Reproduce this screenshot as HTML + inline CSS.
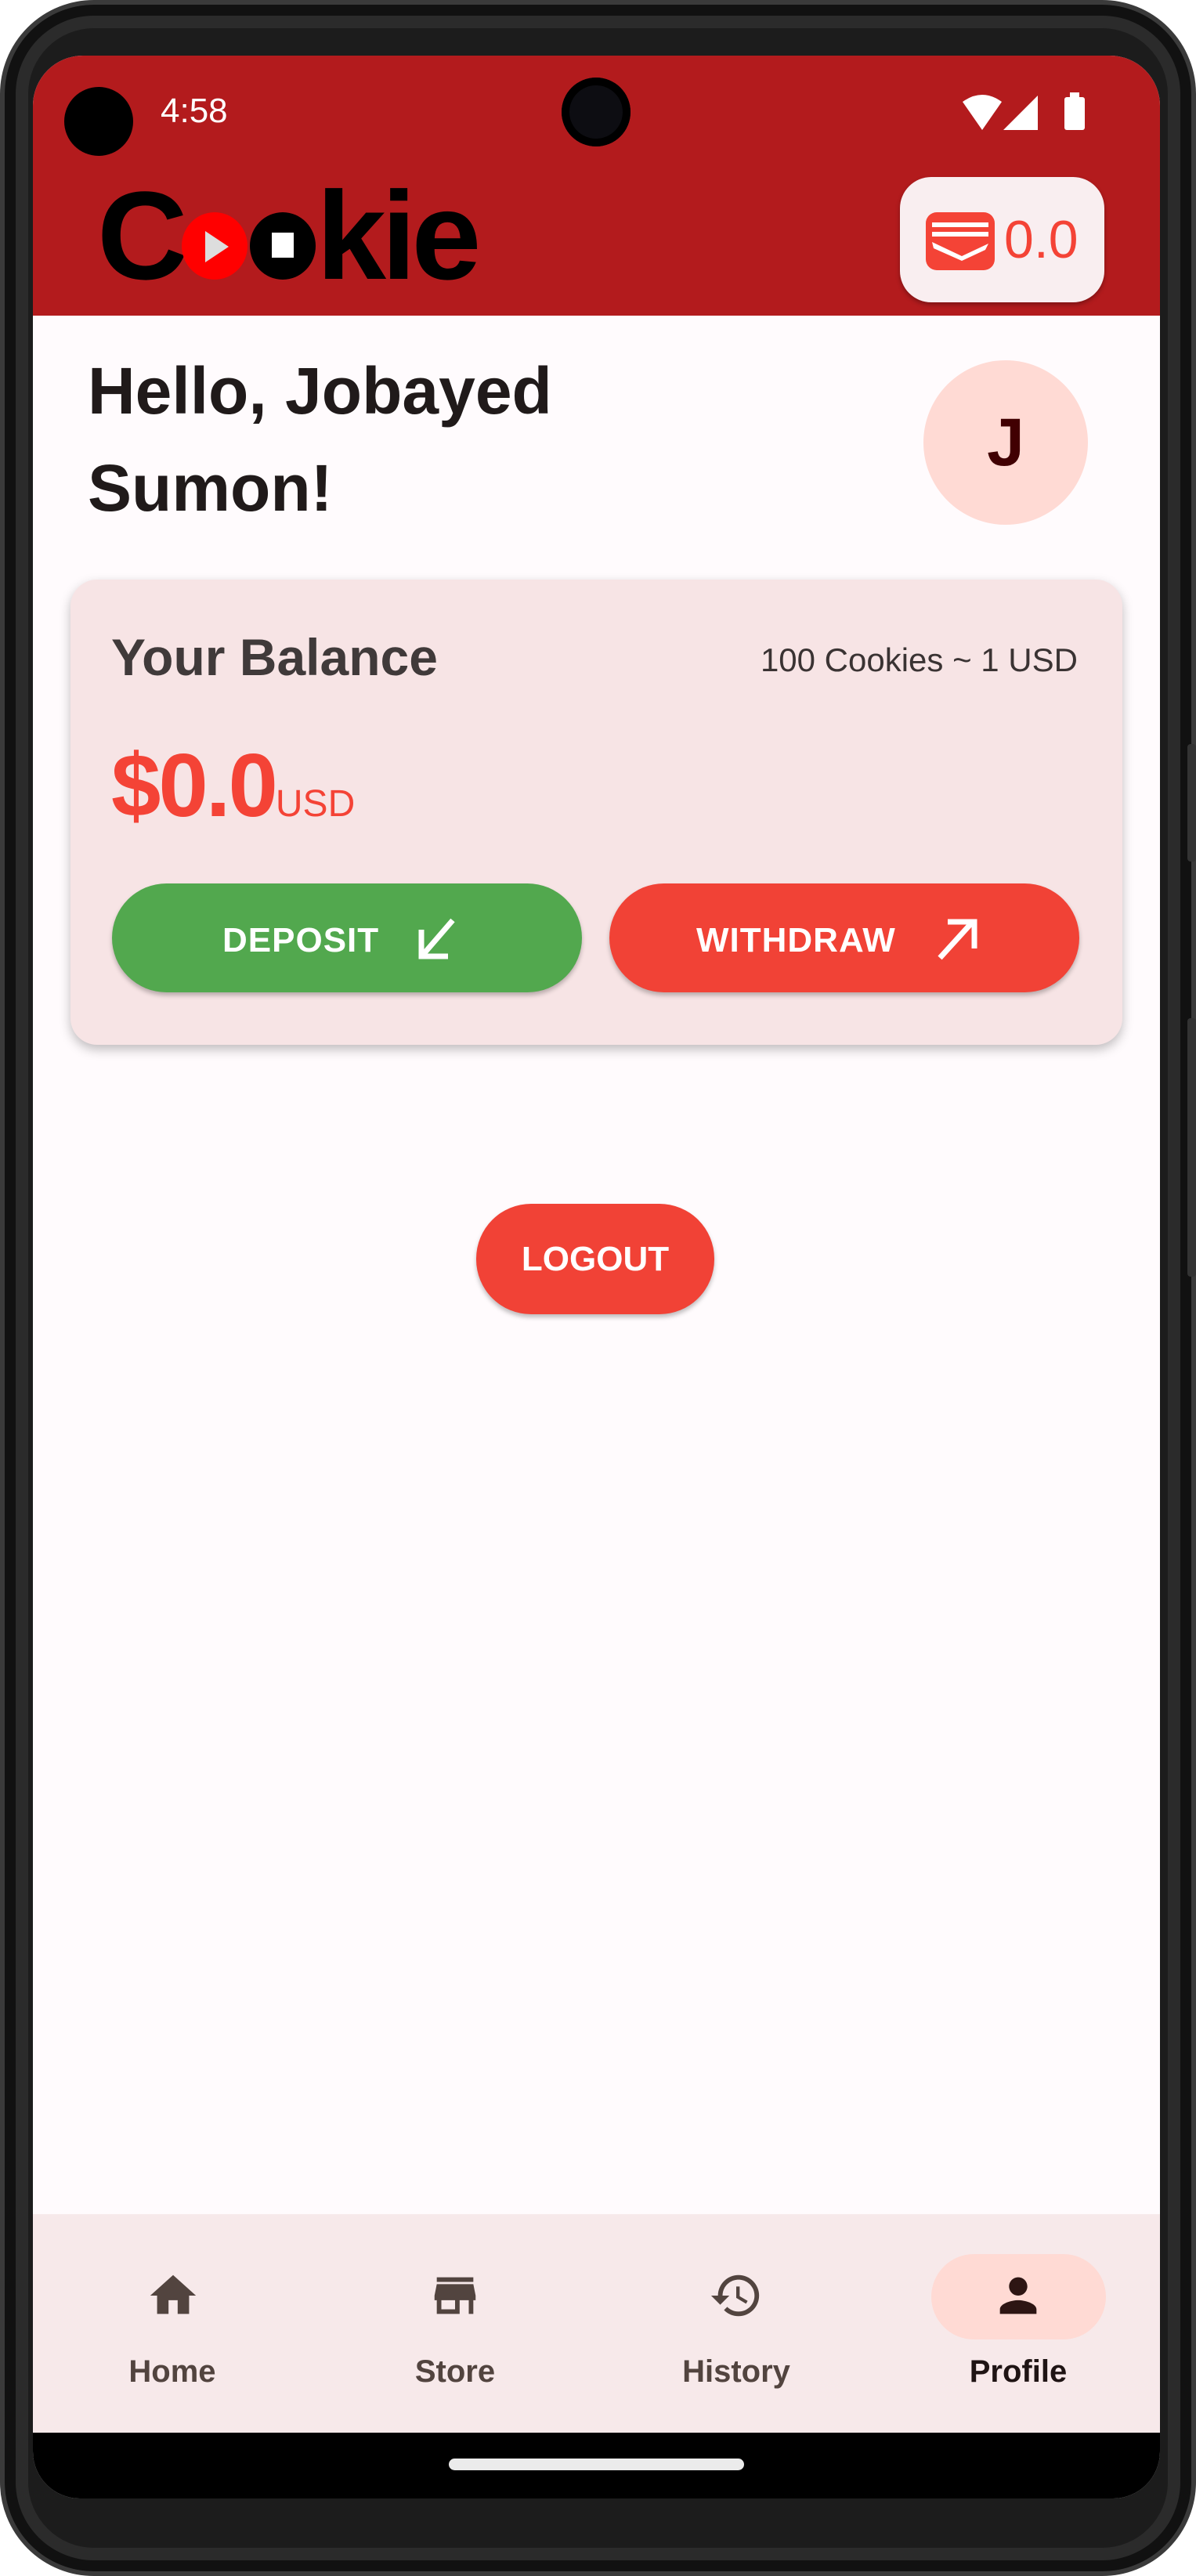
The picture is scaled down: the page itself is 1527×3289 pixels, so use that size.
<!DOCTYPE html>
<html><head><meta charset="utf-8">
<style>
*{margin:0;padding:0;box-sizing:border-box}
html,body{width:1527px;height:3289px;background:#fff;overflow:hidden;font-family:"Liberation Sans",Arial,sans-serif}
.abs{position:absolute}
#phone{left:0;top:0;width:1527px;height:3289px;border-radius:120px;background:#1c1c1c;border:6px solid #3a3a3a;box-shadow:inset 0 0 0 14px #111, inset 0 0 0 30px #2b2b2b}
#screen{left:42px;top:71px;width:1439px;height:3119px;background:#fffbfd;border-radius:64px 64px 60px 60px;overflow:hidden}
</style></head><body>
<div id="phone" class="abs"></div>
<div class="abs" style="left:1516px;top:950px;width:11px;height:150px;background:#333;border-radius:4px"></div>
<div class="abs" style="left:1516px;top:1300px;width:11px;height:330px;background:#333;border-radius:4px"></div>
<div id="screen" class="abs">
  <div class="abs" style="left:0;top:0;width:1439px;height:332px;background:#b31b1d"></div>
  <div class="abs" style="left:40px;top:40px;width:88px;height:88px;border-radius:50%;background:#000"></div>
  <div class="abs" style="left:163px;top:46px;color:#fff;font-size:44px">4:58</div>
  <div class="abs" style="left:675px;top:28px;width:88px;height:88px;border-radius:50%;background:#0d0d12;box-shadow:inset 0 0 0 10px #000"></div>
  <svg class="abs" style="left:1185px;top:45px" width="180" height="55" viewBox="0 0 180 55">
    <path d="M2 14 Q27 -4 52 14 L27 50 Z" fill="#fff"/>
    <path d="M98 6 L98 50 L54 50 Z" fill="#fff"/>
    <rect x="132" y="8" width="26" height="42" rx="3" fill="#fff"/><rect x="139" y="2" width="12" height="8" fill="#fff"/>
  </svg>
  <!-- logo -->
  <div class="abs" style="left:82px;top:150px;font-size:160px;font-weight:bold;color:#000;line-height:160px">C</div>
  <div class="abs" style="left:190px;top:200px;width:84px;height:86px;border-radius:50%;background:#f00"></div>
  <svg class="abs" style="left:216px;top:222px" width="40" height="44"><path d="M4 2 L34 22 L4 42Z" fill="#ddd"/></svg>
  <div class="abs" style="left:277px;top:200px;width:84px;height:86px;border-radius:50%;background:#000"></div>
  <div class="abs" style="left:305px;top:226px;width:28px;height:32px;background:#fff"></div>
  <div class="abs" style="left:362px;top:150px;font-size:160px;font-weight:bold;color:#000;letter-spacing:-6px;line-height:160px">kie</div>
  <!-- wallet chip -->
  <div class="abs" style="left:1107px;top:155px;width:261px;height:160px;background:#f9eef0;border-radius:40px;box-shadow:0 3px 6px rgba(0,0,0,.3)"></div>
  <svg class="abs" style="left:1140px;top:200px" width="90" height="76" viewBox="0 0 90 76">
    <rect x="0" y="0" width="88" height="74" rx="14" fill="#f44336"/>
    <path d="M8 16 H80 M8 28 H80" stroke="#fff" stroke-width="6"/>
    <path d="M8 38 L46 56 L80 40 L76 48 L46 62 L10 46Z" fill="#fff"/>
  </svg>
  <div class="abs" style="left:1240px;top:195px;font-size:68px;color:#f44336;line-height:80px">0.0</div>
  <!-- greeting -->
  <div class="abs" style="left:70px;top:366px;font-size:84px;font-weight:bold;color:#201a1a;line-height:124px">Hello, Jobayed<br>Sumon!</div>
  <div class="abs" style="left:1137px;top:389px;width:210px;height:210px;border-radius:50%;background:#ffdad4;color:#410002;font-size:86px;font-weight:bold;text-align:center;line-height:210px">J</div>
  <!-- card -->
  <div class="abs" style="left:48px;top:669px;width:1343px;height:594px;background:#f7e4e5;border-radius:34px;box-shadow:0 6px 14px rgba(0,0,0,.25)"></div>
  <div class="abs" style="left:100px;top:730px;font-size:66px;font-weight:bold;color:#403a3a">Your Balance</div>
  <div class="abs" style="left:700px;top:748px;width:634px;text-align:right;font-size:42px;color:#3a3333">100 Cookies ~ 1 USD</div>
  <div class="abs" style="left:100px;top:868px;font-size:114px;font-weight:bold;color:#f44336;line-height:130px;letter-spacing:-3px">$0.0<span style="font-size:48px;font-weight:normal;letter-spacing:0">USD</span></div>
  <div class="abs" style="left:101px;top:1057px;width:600px;height:139px;border-radius:70px;background:#52a84e;box-shadow:0 4px 6px rgba(0,0,0,.25)"></div>
  <div class="abs" style="left:242px;top:1105px;color:#fff;font-size:44px;font-weight:bold;letter-spacing:1px">DEPOSIT</div>
  <svg class="abs" style="left:488px;top:1098px" width="60" height="60"><path d="M48 6 L10 50 M8 18 V52 H42" stroke="#fff" stroke-width="7" fill="none"/></svg>
  <div class="abs" style="left:736px;top:1057px;width:600px;height:139px;border-radius:70px;background:#f14236;box-shadow:0 4px 6px rgba(0,0,0,.25)"></div>
  <div class="abs" style="left:847px;top:1105px;color:#fff;font-size:44px;font-weight:bold;letter-spacing:1px">WITHDRAW</div>
  <svg class="abs" style="left:1150px;top:1098px" width="60" height="60"><path d="M8 54 L48 10 M18 8 H52 V42" stroke="#fff" stroke-width="7" fill="none"/></svg>
  <!-- logout -->
  <div class="abs" style="left:566px;top:1466px;width:304px;height:141px;border-radius:70px;background:#f14236;box-shadow:0 4px 6px rgba(0,0,0,.25);color:#fff;font-size:44px;font-weight:bold;text-align:center;line-height:141px">LOGOUT</div>
  <!-- nav -->
  <div class="abs" style="left:0;top:2756px;width:1439px;height:279px;background:#f7e9ea"></div>
  <div class="abs" style="left:1147px;top:2807px;width:223px;height:109px;border-radius:55px;background:#ffdad4"></div>
  <svg class="abs" style="left:144px;top:2825px" width="70" height="70" viewBox="0 0 24 24"><path d="M10 20v-6h4v6h5v-8h3L12 3 2 12h3v8z" fill="#52443f"/></svg>
  <svg class="abs" style="left:504px;top:2825px" width="70" height="70" viewBox="0 0 24 24"><path d="M20 4H4v2h16V4zm1 10v-2l-1-5H4l-1 5v2h1v6h10v-6h4v6h2v-6h1zm-9 4H6v-4h6v4z" fill="#52443f"/></svg>
  <svg class="abs" style="left:863px;top:2825px" width="70" height="70" viewBox="0 0 24 24"><path d="M13 3a9 9 0 0 0-9 9H1l3.89 3.89.07.14L9 12H6c0-3.87 3.13-7 7-7s7 3.13 7 7-3.130 7-7 7c-1.93 0-3.68-.79-4.94-2.06l-1.42 1.42A8.954 8.954 0 0 0 13 21a9 9 0 0 0 0-18zm-1 5v5l4.28 2.54.72-1.21-3.5-2.08V8H12z" fill="#52443f"/></svg>
  <svg class="abs" style="left:1223px;top:2825px" width="70" height="70" viewBox="0 0 24 24"><path d="M12 12c2.21 0 4-1.79 4-4s-1.79-4-4-4-4 1.79-4 4 1.79 4 4 4zm0 2c-2.67 0-8 1.34-8 4v2h16v-2c0-2.66-5.33-4-8-4z" fill="#2d1513"/></svg>
  <div class="abs" style="left:78px;top:2935px;width:200px;text-align:center;font-size:40px;color:#52443f;font-weight:bold">Home</div>
  <div class="abs" style="left:439px;top:2935px;width:200px;text-align:center;font-size:40px;color:#52443f;font-weight:bold">Store</div>
  <div class="abs" style="left:798px;top:2935px;width:200px;text-align:center;font-size:40px;color:#52443f;font-weight:bold">History</div>
  <div class="abs" style="left:1158px;top:2935px;width:200px;text-align:center;font-size:40px;color:#1f1414;font-weight:bold">Profile</div>
  <div class="abs" style="left:0;top:3035px;width:1439px;height:84px;background:#000"></div>
  <div class="abs" style="left:531px;top:3068px;width:377px;height:15px;border-radius:8px;background:#ebebeb"></div>
</div>
</body></html>
